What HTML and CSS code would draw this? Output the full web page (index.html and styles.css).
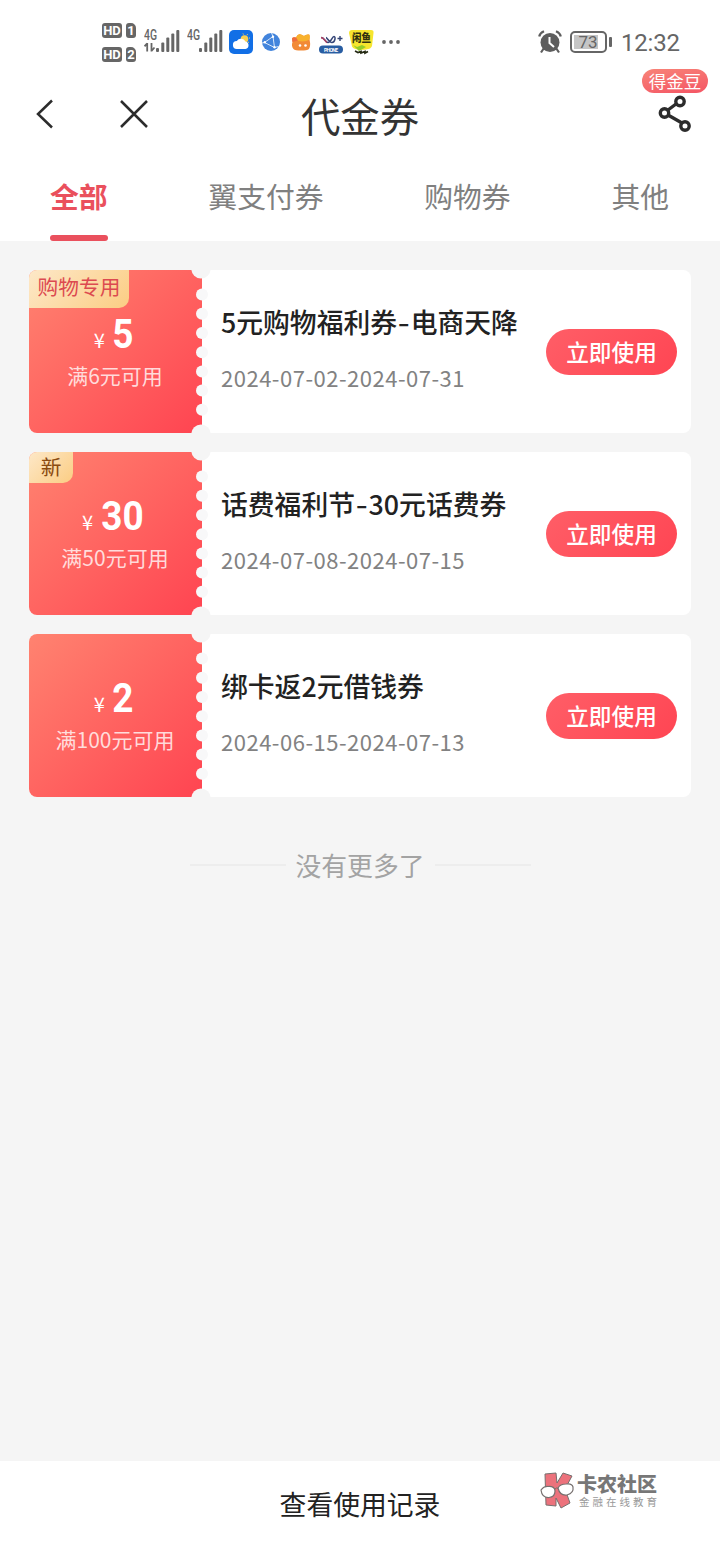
FILE: index.html
```html
<!DOCTYPE html>
<html lang="zh-CN">
<head>
<meta charset="utf-8">
<title>代金券</title>
<link rel="stylesheet" href="styles.css">
</head>
<body>
<div class="app">
  <header class="top">
    <div class="status">
      <div class="sims">
        <div class="sim"><span class="hd">HD</span><span class="slot">1</span></div>
        <div class="sim"><span class="hd">HD</span><span class="slot">2</span></div>
      </div>
      <svg class="signal" width="36" height="30" viewBox="0 -4 36 30" fill="#666">
        <text class="net" x="0" y="10.500" textLength="13" lengthAdjust="spacingAndGlyphs">4G</text>
        <path d="M3.200 14v8.500M3.200 14.300l-2.700 3M7.500 14v8.500M7.500 22l3-3.500" stroke="#666" stroke-width="1.800" fill="none"/>
        <rect x="12" y="19" width="3" height="4" rx="1"/><rect x="17.300" y="13.500" width="3" height="9.500" rx="1"/><rect x="22.300" y="8.500" width="3" height="14.500" rx="1"/><rect x="27.300" y="4.500" width="3" height="18.500" rx="1"/><rect x="32.300" y="1" width="3" height="22" rx="1"/>
      </svg>
      <svg class="signal second" width="36" height="30" viewBox="0 -4 36 30" fill="#666">
        <text class="net" x="0" y="10.500" textLength="13" lengthAdjust="spacingAndGlyphs">4G</text>
        <rect x="12" y="19" width="3" height="4" rx="1"/><rect x="17.300" y="13.500" width="3" height="9.500" rx="1"/><rect x="22.300" y="8.500" width="3" height="14.500" rx="1"/><rect x="27.300" y="4.500" width="3" height="18.500" rx="1"/><rect x="32.300" y="1" width="3" height="22" rx="1"/>
      </svg>
      <div class="apps">
        <svg width="24" height="24" viewBox="0 0 24 24">
          <rect width="24" height="24" rx="5" fill="#126fe6"/>
          <circle cx="15.500" cy="9" r="3.800" fill="#f8cf52"/>
          <path d="M14 3.500l.5 1M18.500 4.200l-.5 1M21 8h-1M20 12.500l-1-.5" stroke="#f8cf52" stroke-width="1"/>
          <path d="M8 19a4 4 0 0 1-.2-8 5 5 0 0 1 8.700.4A3.900 3.900 0 0 1 16.500 19z" fill="#fff"/>
        </svg>
        <svg width="18" height="18" viewBox="0 0 18 18">
          <circle cx="9" cy="9" r="9" fill="#4284dc"/>
          <path d="M2.500 9.500L11 3.500l1.500 11zM11 3.500L9.500 0M12.500 14.500l4-1M2.500 9.500L0 10" stroke="#d7e7fa" stroke-width="1" fill="none"/>
          <circle cx="2.800" cy="9.300" r="1.200" fill="#fff"/><circle cx="11" cy="3.700" r="1.200" fill="#fff"/><circle cx="12.500" cy="14.300" r="1.200" fill="#fff"/>
        </svg>
        <svg width="20" height="18" viewBox="0 0 20 18">
          <path d="M1 5.500Q2 3.500 5 4.500 7 0 10 1.500L13 3Q15 1 18 1.500 19 2 18.500 6.500 20 13 18 16q-2 1.500-8 1.500T2.500 16Q0 13 1.500 9z" fill="#f28a36"/>
          <path d="M5 4.500Q7 0 10 1.500L13 3q2-2 5-1.500 1 .5 .5 5-5 3.500-12.500 1z" fill="#f8b12d"/>
          <path d="M1 5.500q1-2 4-1l2 3L1.500 9z" fill="#ed6c3f"/>
          <circle cx="9" cy="12.500" r="1.300" fill="#fff"/><circle cx="14.500" cy="12.500" r="1.300" fill="#fff"/>
        </svg>
        <svg width="26" height="20" viewBox="0 0 26 20">
          <path d="M3 3.500c4 0 4 5 7 5s4-6 6-6 1 6-2 6-5-5-6-5" fill="none" stroke="#334476" stroke-width="1.500"/>
          <path d="M3 3.500c3 0 4 4 6 5" fill="none" stroke="#b04061" stroke-width="1.400"/>
          <path d="M19.500 4.500h5M22 2v5" stroke="#334476" stroke-width="1.400"/>
          <rect x="1" y="11.500" width="24" height="8" rx="4" fill="#285da2"/>
          <text class="badge-text" x="6" y="17.500" textLength="14">PHONE</text>
        </svg>
        <svg width="25" height="26" viewBox="0 0 25 26">
          <path d="M3 1h19q3 0 2.500 3L23 17q-1 3-6 3.500-12 1-14-3L0 4q0-3 3-3z" fill="#f7e52e"/>
          <path d="M4 16l4 2 5-2 4 2-7 4z" fill="#94cc2a"/>
          <text class="fish" x="3" y="13" textLength="19" lengthAdjust="spacingAndGlyphs">闲鱼</text>
          <path d="M6 22l3 1.500 3-1v1.500l4-1.500v1.500l3-1.500" stroke="#242913" stroke-width="1.700" fill="none"/>
        </svg>
        <svg width="20" height="6" viewBox="0 0 20 6" fill="#666"><circle cx="3" cy="3" r="1.900"/><circle cx="10" cy="3" r="1.900"/><circle cx="17" cy="3" r="1.900"/></svg>
      </div>
      <div class="status-right">
        <svg width="24" height="24" viewBox="0 0 24 24">
          <circle cx="12" cy="12.500" r="9.500" fill="#5e5e5e"/>
          <path d="M1.200 6.500Q2 3 6 1.300M22.800 6.500Q22 3 18 1.300M6 18l-3 4.500M18 18l3 4.500" stroke="#5e5e5e" stroke-width="2.200" fill="none"/>
          <path d="M11.500 7V13l4.500 4" stroke="#fff" stroke-width="2" fill="none"/>
        </svg>
        <svg class="battery" width="43" height="22" viewBox="0 0 43 22">
          <rect x="1" y="1" width="35" height="20" rx="4" fill="#fff" stroke="#666" stroke-width="2"/>
          <path d="M4 4h24v14H4z" fill="#c5c5c5"/>
          <rect x="39" y="6" width="3" height="10" rx="1" fill="#666"/>
          <text class="level" x="8.500" y="17.300" textLength="19">73</text>
        </svg>
        <span class="clock">12:32</span>
      </div>
    </div>

    <nav class="nav">
      <div class="nav-side">
        <svg width="18" height="30" viewBox="0 0 18 30"><path d="M16 1.500L2 15l14 13.500" fill="none" stroke="#2c2c2c" stroke-width="2.500"/></svg>
        <svg width="28" height="28" viewBox="0 0 28 28"><path d="M1 1l26 26M27 1L1 27" fill="none" stroke="#2c2c2c" stroke-width="2.500"/></svg>
      </div>
      <h1 class="title">代金券</h1>
      <div class="share">
        <svg width="36" height="40" viewBox="0 0 36 40" fill="none" stroke="#2c2c2c" stroke-width="3.400">
          <path d="M11 15l8-6M11 20l14 8"/><circle cx="23" cy="6.500" r="4.200"/><circle cx="7.500" cy="18" r="4.200"/><circle cx="28" cy="31" r="4.200"/>
        </svg>
        <span class="bean">得金豆</span>
      </div>
    </nav>

    <div class="tabs">
      <span class="tab active">全部</span>
      <span class="tab">翼支付券</span>
      <span class="tab">购物券</span>
      <span class="tab">其他</span>
    </div>
  </header>

  <svg class="defs" width="0" height="0">
    <symbol id="edge" viewBox="0 0 20 163">
      <g fill="#f5f5f5"><circle cx="10" cy="-1" r="9.600"/><circle cx="10" cy="164" r="9.600"/></g>
      <g fill="#f8f8f9"><circle cx="11" cy="24.600" r="6"/><circle cx="11" cy="43.800" r="6"/><circle cx="11" cy="63" r="6"/><circle cx="11" cy="82.200" r="6"/><circle cx="11" cy="101.400" r="6"/><circle cx="11" cy="120.600" r="6"/><circle cx="11" cy="139.800" r="6"/></g>
    </symbol>
  </svg>

  <main class="list">
    <article class="coupon">
      <div class="value">
        <span class="tag special">购物专用</span>
        <div class="amount"><span class="yen">¥</span><span class="num">5</span></div>
        <div class="cond">满6元可用</div>
        <svg class="edge"><use href="#edge"/></svg>
      </div>
      <div class="info">
        <div class="text"><h2 class="name">5元购物福利券<span class="dash">-</span>电商天降</h2><div class="date">2024-07-02-2024-07-31</div></div>
        <button class="use">立即使用</button>
      </div>
    </article>
    <article class="coupon">
      <div class="value">
        <span class="tag new">新</span>
        <div class="amount"><span class="yen">¥</span><span class="num">30</span></div>
        <div class="cond">满50元可用</div>
        <svg class="edge"><use href="#edge"/></svg>
      </div>
      <div class="info">
        <div class="text"><h2 class="name">话费福利节<span class="dash">-</span>30元话费券</h2><div class="date">2024-07-08-2024-07-15</div></div>
        <button class="use">立即使用</button>
      </div>
    </article>
    <article class="coupon">
      <div class="value">
        <div class="amount"><span class="yen">¥</span><span class="num">2</span></div>
        <div class="cond">满100元可用</div>
        <svg class="edge"><use href="#edge"/></svg>
      </div>
      <div class="info">
        <div class="text"><h2 class="name">绑卡返2元借钱券</h2><div class="date">2024-06-15-2024-07-13</div></div>
        <button class="use">立即使用</button>
      </div>
    </article>
    <div class="end">没有更多了</div>
  </main>

  <footer class="footer">
    <span>查看使用记录</span>
    <div class="mark">
      <svg width="36" height="38" viewBox="0 0 36 38">
        <path d="M5 3l11-1 1 10 6-10 9 3-7 13 5 14-9 5-5-10v8L6 34z" fill="#ec727c" stroke="#77706f" stroke-width="1"/>
        <path d="M1 19q3-4 7-3.500 7-.5 7 4.500 0 6-6 6.500-7 .5-8-7.500zM18 17q2-4 8-4 6-1 7 3 1 6-6 8-7 1-9-7z" fill="#fff" stroke="#77706f" stroke-width="1.200"/>
        <path d="M15 18q2-2 3-.5" stroke="#77706f" fill="none"/>
      </svg>
      <div class="mark-text"><b class="mark-name">卡农社区</b><span class="mark-sub">金融在线教育</span></div>
    </div>
  </footer>
</div>
</body>
</html>
```
FILE: styles.css
```css
* { box-sizing: border-box; }
body {
  margin: 0;
  background: #f5f5f5;
  color: #222;
  font-family: "Noto Sans CJK SC", "Noto Sans", sans-serif;
}
h1, h2 { margin: 0; font-weight: 400; }
svg { display: block; flex: none; }
.app { width: 720px; height: 1560px; display: flex; flex-direction: column; }
.top { height: 241px; background: #fff; flex: none; }

.status { height: 66px; padding: 18px 40px 0 102px; display: flex; align-items: flex-start; }
.sims { display: grid; gap: 9px; padding-top: 5px; width: 42px; }
.sim { display: flex; gap: 4px; }
.hd, .slot {
  height: 15px; background: #666; color: #fff; border-radius: 3px; text-align: center;
  font: bold 13px/15px Roboto, sans-serif;
}
.hd { width: 20px; }
.slot { width: 10px; border-top-right-radius: 5px; }
.signal { margin-top: 7px; }
.second { margin-left: 7px; }
.net { font: 500 14px Roboto, sans-serif; }
.apps { display: flex; align-items: center; height: 48px; margin-left: 6px; }
.apps svg:nth-child(2) { margin-left: 9px; }
.apps svg:nth-child(3) { margin-left: 11px; }
.apps svg:nth-child(4) { margin: 4px 0 0 7px; }
.apps svg:nth-child(5) { margin-left: 5px; }
.apps svg:nth-child(6) { margin-left: 7px; }
.badge-text { font: bold 5px Roboto, sans-serif; fill: #fff; }
.fish { font: 900 11px "Noto Sans CJK SC", sans-serif; fill: #30300f; }
.status-right { margin-left: auto; display: flex; align-items: center; height: 48px; }
.battery { margin-left: 8px; }
.level { font: 17px Roboto, sans-serif; fill: #666; }
.clock { font: 24px/28px Roboto, sans-serif; color: #666; margin-left: 8px; padding-top: 1px; width: 59px; white-space: nowrap; letter-spacing: -.2px; }

.nav { height: 96px; display: grid; grid-template-columns: 260px 200px 260px; }
.nav-side { display: flex; align-items: center; gap: 66px; padding: 0 0 1px 36px; }
.title { text-align: center; font-size: 39.400px; line-height: 97px; height: 96px; color: #333; }
.share { position: relative; padding: 29px 0 0 397px; margin-left: -200px; }
.share svg { width: 36px; }
.bean {
  position: absolute; top: 3px; right: 12px; width: 66px; height: 24px; border-radius: 12px;
  background: linear-gradient(170deg, #f88478, #f45564); color: #fff; text-align: center;
  font-size: 17.500px; line-height: 24px;
}

.tabs { height: 79px; display: flex; justify-content: space-between; padding: 0 51px 0 50px; }
.tab { height: 79px; font-size: 28.800px; line-height: 68px; color: #808080; }
.active { color: #ea505d; font-weight: 700; }
.active::after { content: ""; display: block; height: 6px; border-radius: 3px; margin-top: 5px; background: #ea505d; }

.defs { position: absolute; }
.list { flex: 1; padding: 29px 29px 0; display: flex; flex-direction: column; gap: 19px; }
.coupon { height: 163px; display: flex; background: #fff; border-radius: 8px; flex: none; }
.value {
  position: relative; width: 173px; padding-top: 42.500px; color: #fff; text-align: center;
  border-radius: 8px 0 0 8px; background: linear-gradient(135deg, #ff8370, #ff4451);
}
.tag {
  position: absolute; left: 0; top: 0; border-radius: 8px 0 10px 0;
  background: linear-gradient(135deg, #fde8c8, #fbcd83); font-size: 20.700px;
}
.special { width: 100px; height: 38px; line-height: 33px; color: #dc4a50; }
.new { width: 44px; height: 31px; line-height: 28px; color: #8a4b10; }
.amount { height: 42px; display: flex; justify-content: center; align-items: baseline; gap: 7px; padding-right: 4px; }
.yen { font: 20px/42px "Noto Sans CJK SC", sans-serif; }
.num { font: 700 41px/42px Roboto, sans-serif; transform: scaleX(.9); margin: 0 -1px; }
.cond { font-size: 21px; line-height: 30px; margin-top: 5.500px; color: rgba(255,255,255,.78); padding-right: 1px; }
.edge { position: absolute; left: 162px; top: 0; width: 20px; height: 163px; overflow: hidden; }
.info { flex: 1; display: flex; justify-content: space-between; align-items: center; padding: 0 14px 0 19px; }
.name { font-size: 26.800px; font-weight: 500; line-height: 40px; white-space: nowrap; }
.dash { display: inline-block; margin: 0 2px; transform: scaleX(1.25); }
.date { font-size: 22px; line-height: 32px; margin-top: 19px; color: #828282; letter-spacing: .5px; white-space: nowrap; }
.text { width: 310px; padding-bottom: 8px; }
.use {
  width: 131px; height: 46px; border: 0; border-radius: 23px; padding: 0; color: #fff;
  background: linear-gradient(135deg, #ff5e67, #ff4553);
  font: 500 22.700px/46px "Noto Sans CJK SC", sans-serif; flex: none;
}
.end { display: flex; align-items: center; justify-content: center; gap: 10px; margin-top: 29px; font-size: 25.800px; line-height: 40px; color: #a3a3a3; }
.end::before, .end::after { content: ""; width: 96px; height: 2px; background: #ededed; }

.footer { position: relative; height: 99px; background: #fff; text-align: center; font-size: 26.800px; line-height: 86px; flex: none; }
.mark { position: absolute; left: 540px; top: 10px; display: flex; gap: 1px; }
.mark-text { display: grid; text-align: left; align-content: start; }
.mark-name { font-size: 20px; line-height: 25px; font-weight: 900; color: #777; white-space: nowrap; }
.mark-sub { font-size: 10.500px; line-height: 12px; letter-spacing: 3px; color: #999; white-space: nowrap; padding-left: 2px; }
```
